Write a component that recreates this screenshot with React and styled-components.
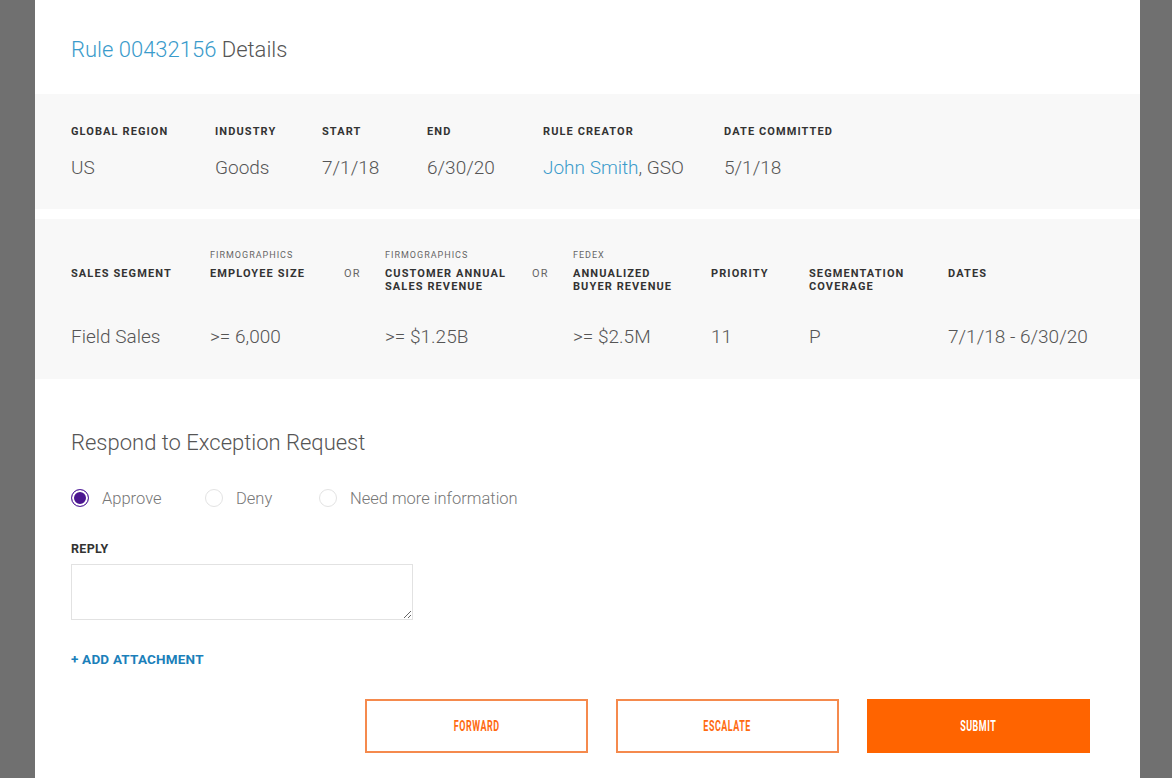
import React from 'react';
import styled, { createGlobalStyle } from 'styled-components';

const GlobalStyle = createGlobalStyle`
    html, body {
        margin: 0;
        background: #707070;
        font-family: Roboto, "Liberation Sans", sans-serif;
    }
`;

const Panel = styled.main`
    margin-left: 35px;
    width: 1105px;
    min-height: 100vh;
    background: #ffffff;
    box-sizing: border-box;
`;

const Header = styled.header`
    height: 94px;
    padding: 36px 36px 0;
    box-sizing: border-box;
`;

const Title = styled.h1`
    margin: 0;
    font-size: 22px;
    line-height: 28px;
    font-weight: 300;
    color: #555;
`;

const Link = styled.span`
    color: #3a9bcb;
`;

const InfoBand = styled.section`
    background: #f8f8f8;
    display: flex;
    padding: ${p => p.$pad};
    margin-bottom: ${p => p.$gap || 0}px;
`;

const Column = styled.div`
    width: ${p => p.$w}px;
    flex: none;
    display: flex;
    flex-direction: column;
`;

const Kicker = styled.div`
    font-size: 9px;
    line-height: 12px;
    height: 12px;
    letter-spacing: 1px;
    color: #666;
    margin-bottom: 6px;
`;

const Label = styled.div`
    font-size: 11px;
    line-height: ${p => p.$lh || 14}px;
    height: ${p => p.$h || 'auto'};
    font-weight: 700;
    letter-spacing: 1.1px;
    color: #333;
    text-transform: uppercase;
`;

const Or = styled.div`
    font-size: 11px;
    line-height: 13px;
    letter-spacing: 1.1px;
    color: #666;
    margin-top: 18px;
`;

const Value = styled.div`
    font-size: 19px;
    line-height: 24px;
    font-weight: 300;
    color: #555;
    margin-top: ${p => p.$mt}px;
    white-space: nowrap;
`;

const Respond = styled.section`
    padding: 50px 50px 25px 36px;
    display: flex;
    flex-direction: column;
`;

const SubTitle = styled.h2`
    margin: 0;
    font-size: 22px;
    line-height: 28px;
    font-weight: 300;
    color: #555;
`;

const Radios = styled.div`
    display: flex;
    margin-top: 29px;
    height: 24px;
`;

const RadioItem = styled.label`
    display: flex;
    align-items: center;
    width: ${p => p.$w}px;
    font-size: 16.5px;
    font-weight: 300;
    color: #777;
`;

const RadioDot = styled.span`
    width: 18px;
    height: 18px;
    box-sizing: border-box;
    border-radius: 50%;
    margin-right: 13px;
    border: ${p => (p.$on ? '1.5px solid #5b2aa0' : '1.5px solid #e3e3e3')};
    background: ${p => (p.$on ? '#4b1590' : '#fff')};
    box-shadow: ${p => (p.$on ? 'inset 0 0 0 2px #fff' : 'none')};
`;

const FieldLabel = styled.div`
    margin-top: 31px;
    font-size: 12.5px;
    line-height: 16px;
    font-weight: 700;
    letter-spacing: 0.3px;
    color: #333;
`;

const Reply = styled.textarea`
    margin-top: 7px;
    width: 342px;
    height: 56px;
    box-sizing: border-box;
    border: 1px solid #e2e2e2;
    border-radius: 0;
    resize: vertical;
    font-family: inherit;
    outline: none;
`;

const AddLink = styled.a`
    margin-top: 31px;
    font-size: 13.5px;
    line-height: 16px;
    font-weight: 700;
    color: #1b7fba;
    letter-spacing: 0.2px;
    cursor: pointer;
`;

const Actions = styled.div`
    display: flex;
    justify-content: flex-end;
    gap: 28px;
    margin-top: 32px;
`;

const Button = styled.button`
    width: 223px;
    height: 54px;
    box-sizing: border-box;
    border: 2px solid ${p => (p.$primary ? '#ff6400' : '#f58a4d')};
    background: ${p => (p.$primary ? '#ff6400' : '#fff')};
    color: ${p => (p.$primary ? '#fff' : '#ff6a10')};
    font-family: inherit;
    cursor: pointer;
    display: flex;
    align-items: center;
    justify-content: center;
`;

// the source uses a condensed face; squeeze Roboto bold to match
const ButtonText = styled.span`
    display: inline-block;
    font-size: 14px;
    font-weight: 700;
    letter-spacing: 0.8px;
    transform: scaleX(0.64);
`;

const summary = [
    { label: 'Global Region', value: 'US', w: 144 },
    { label: 'Industry', value: 'Goods', w: 107 },
    { label: 'Start', value: '7/1/18', w: 105 },
    { label: 'End', value: '6/30/20', w: 116 },
    { label: 'Rule Creator', value: <><Link>John Smith</Link>, GSO</>, w: 181 },
    { label: 'Date Committed', value: '5/1/18', w: 200 },
];

const segments = [
    { label: 'Sales Segment', value: 'Field Sales', w: 139 },
    { kicker: 'FIRMOGRAPHICS', label: 'Employee Size', value: '>= 6,000', w: 134 },
    { or: true, w: 41 },
    { kicker: 'FIRMOGRAPHICS', label: <>Customer Annual<br />Sales Revenue</>, value: '>= $1.25B', w: 147 },
    { or: true, w: 41 },
    { kicker: 'FEDEX', label: <>Annualized<br />Buyer Revenue</>, value: '>= $2.5M', w: 138 },
    { label: 'Priority', value: '11', w: 98 },
    { label: <>Segmentation<br />Coverage</>, value: 'P', w: 139 },
    { label: 'Dates', value: '7/1/18 - 6/30/20', w: 150 },
];

const options = [
    { label: 'Approve', w: 134, on: true },
    { label: 'Deny', w: 114 },
    { label: 'Need more information', w: 220 },
];

export default function App() {
    return (
        <>
            <GlobalStyle />
            <Panel>
                <Header>
                    <Title><Link>Rule 00432156</Link> Details</Title>
                </Header>

                <InfoBand $pad="31px 36px 29px" $gap={10}>
                    {summary.map((c, i) => (
                        <Column key={i} $w={c.w}>
                            <Label>{c.label}</Label>
                            <Value $mt={17}>{c.value}</Value>
                        </Column>
                    ))}
                </InfoBand>

                <InfoBand $pad="30px 36px 30px">
                    {segments.map((c, i) => (
                        <Column key={i} $w={c.w}>
                            {c.or ? (
                                <Or>OR</Or>
                            ) : (
                                <>
                                    <Kicker>{c.kicker}</Kicker>
                                    <Label $lh={13} $h="26px">{c.label}</Label>
                                    <Value $mt={32}>{c.value}</Value>
                                </>
                            )}
                        </Column>
                    ))}
                </InfoBand>

                <Respond>
                    <SubTitle>Respond to Exception Request</SubTitle>
                    <Radios>
                        {options.map(o => (
                            <RadioItem key={o.label} $w={o.w}>
                                <RadioDot $on={o.on} />
                                {o.label}
                            </RadioItem>
                        ))}
                    </Radios>
                    <FieldLabel>REPLY</FieldLabel>
                    <Reply />
                    <AddLink>+ ADD ATTACHMENT</AddLink>
                    <Actions>
                        <Button><ButtonText>FORWARD</ButtonText></Button>
                        <Button><ButtonText>ESCALATE</ButtonText></Button>
                        <Button $primary><ButtonText>SUBMIT</ButtonText></Button>
                    </Actions>
                </Respond>
            </Panel>
        </>
    );
}
